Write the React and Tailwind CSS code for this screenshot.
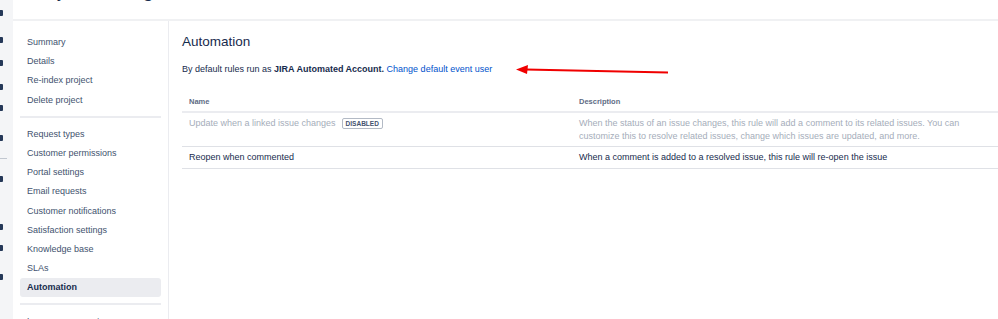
import React from "react";

const groupA = ["Summary", "Details", "Re-index project", "Delete project"];
const groupB = [
  "Request types",
  "Customer permissions",
  "Portal settings",
  "Email requests",
  "Customer notifications",
  "Satisfaction settings",
  "Knowledge base",
  "SLAs",
];

const marks = [13, 40, 63, 87, 108, 138, 179, 227, 248, 277];

function NavItem({ label, active }) {
  return (
    <div
      className={
        "h-[19.2px] px-[7px] flex items-center rounded-[3px] text-[9px] leading-[13px] " +
        (active ? "bg-[#ebecf0] text-[#172b4d] font-bold" : "text-[#42526e]")
      }
    >
      {label}
    </div>
  );
}

export default function App() {
  return (
    <div className="flex h-[319px] w-[998px] overflow-hidden bg-white font-['Liberation_Sans',Arial,sans-serif]">
      {/* left strip */}
      <div className="relative w-[13px] shrink-0 bg-[#f4f5f7]">
        {marks.map((y) => (
          <div
            key={y}
            className="absolute left-0 w-[3px] h-[6px] bg-[#253858] rounded-r-[1px]"
            style={{ top: y - 3 }}
          />
        ))}
        <div className="absolute left-0 top-[158px] w-[7px] h-[1px] bg-[#c1c7d0]" />
      </div>

      <div className="flex flex-1 flex-col min-w-0">
        {/* header */}
        <div className="h-[21px] shrink-0 overflow-hidden border-b-2 border-[#f0f1f3] pl-[14px]">
          <div className="mt-[-22px] text-[20px] leading-[24px] text-[#172b4d]">Project settings</div>
        </div>

        <div className="flex flex-1 min-h-0">
          {/* sidebar */}
          <nav className="w-[156px] shrink-0 border-r border-[#ebecf0] px-[7px] pt-[12px]">
            {groupA.map((l) => (
              <NavItem key={l} label={l} />
            ))}
            <div className="mt-[6px] mb-[7px] h-[2px] bg-[#ebecf0]" />
            {groupB.map((l) => (
              <NavItem key={l} label={l} />
            ))}
            <NavItem label="Automation" active />
            <div className="my-[6px] h-[2px] bg-[#ebecf0]" />
            <NavItem label="Language support" />
          </nav>

          {/* main */}
          <main className="relative flex-1 min-w-0 pl-[13px] pt-[12px]">
            <h2 className="text-[13.5px] leading-[18px] text-[#172b4d]">Automation</h2>
            <p className="mt-[12px] text-[9px] leading-[13px] text-[#172b4d]">
              By default rules run as <span className="font-bold">JIRA Automated Account.</span>{" "}
              <span className="text-[#0052cc]">Change default event user</span>
            </p>

            <div className="mt-[17px]">
              <div className="grid grid-cols-[390px_1fr] border-b-2 border-[#ebecf0] h-[20px] items-center text-[7.5px] font-bold text-[#5e6c84]">
                <div className="px-[7px]">Name</div>
                <div className="px-[7px]">Description</div>
              </div>
              <div className="grid grid-cols-[390px_1fr] border-b border-[#dfe1e6] pt-[4px] pb-[3px] text-[9px] leading-[13px]">
                <div className="px-[7px] flex items-start">
                  <span className="text-[#a5adba]">Update when a linked issue changes</span>
                  <span className="ml-[6px] mt-[1px] h-[11px] px-[3px] border border-[#b3bac5] rounded-[2px] text-[6.5px] leading-[9px] font-bold text-[#42526e] flex items-center">
                    DISABLED
                  </span>
                </div>
                <div className="px-[7px] text-[#a5adba]">
                  When the status of an issue changes, this rule will add a comment to its related issues. You can
                  customize this to resolve related issues, change which issues are updated, and more.
                </div>
              </div>
              <div className="grid grid-cols-[390px_1fr] border-b border-[#dfe1e6] py-[4px] text-[9px] leading-[13px] text-[#172b4d]">
                <div className="px-[7px]">Reopen when commented</div>
                <div className="px-[7px]">When a comment is added to a resolved issue, this rule will re-open the issue</div>
              </div>
            </div>

            {/* annotation arrow */}
            <svg
              className="absolute left-[347px] top-[42px]"
              width="154"
              height="16"
              viewBox="0 0 154 16"
            >
              <line x1="10" y1="6.5" x2="152" y2="9.5" stroke="#f00000" strokeWidth="2" />
              <polygon points="0,6.5 12,2 11,11" fill="#f00000" />
            </svg>
          </main>
        </div>
      </div>
    </div>
  );
}
